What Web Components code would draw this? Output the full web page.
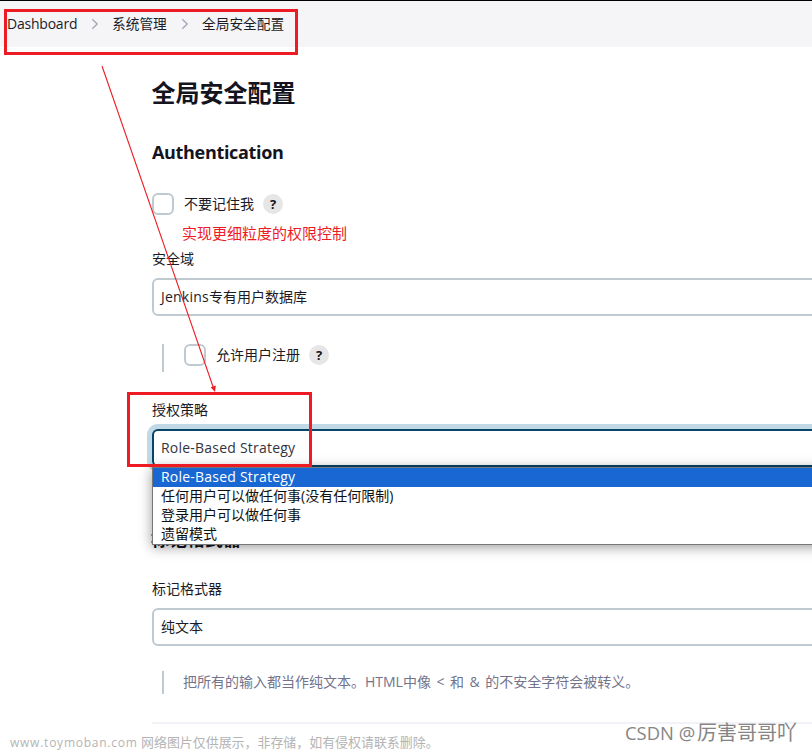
<!DOCTYPE html>
<html lang="zh-CN">
<head>
<meta charset="utf-8">
<title>全局安全配置</title>
<style>
html, body { margin: 0; height: 100%; overflow: hidden; background: #fff; }
body { font: 400 14px/18px "Open Sans", "Noto Sans CJK SC", sans-serif; color: #1b1b26; }
</style>
</head>
<body>
<security-page></security-page>
<script>
const define = (name, html) => {
  const template = document.createElement('template');
  template.innerHTML = html;
  customElements.define(name, class extends HTMLElement {
    constructor() {
      super();
      this.attachShadow({ mode: 'open' }).append(template.content.cloneNode(true));
    }
  });
};

define('crumb-separator', `
<style>:host{display:block;width:8px;height:12px} svg{display:block}</style>
<svg width="8" height="12" viewBox="0 0 8 12" fill="none" stroke="#a3a3b8" stroke-width="1.3"><path d="M1.3 1.2 6.2 6 1.3 10.8"/></svg>`);

define('page-breadcrumbs', `
<style>
:host{display:flex;box-sizing:border-box;height:47px;border-top:1px solid #000;background:#f5f5f8;padding:0 0 1px 7px;align-items:center;font-size:13.7px;white-space:nowrap}
.a{width:70px;font-size:14px;letter-spacing:-.22px}
crumb-separator{margin:0 13px 0 14px}
.b{width:55px}
</style>
<span class="a">Dashboard</span><crumb-separator></crumb-separator><span class="b">系统管理</span><crumb-separator></crumb-separator><span>全局安全配置</span>`);

define('help-button', `
<style>:host{display:flex;width:20px;height:20px;border-radius:50%;background:#e6e6e6;align-items:center;justify-content:center;font:bold 13px/20px "Open Sans",sans-serif;color:#14141f}</style>
<span>?</span>`);

define('check-option', `
<style>
:host{display:flex;height:22px;align-items:center}
i{box-sizing:border-box;width:22px;height:22px;border:2px solid #bfcad0;border-radius:6px;margin-right:10px;background:#fff}
help-button{margin-left:9px}
</style>
<i></i><slot></slot><help-button></help-button>`);

define('select-box', `
<style>
:host{display:flex;box-sizing:border-box;height:38px;border:2px solid #bfcad0;border-radius:6px;padding-left:7px;align-items:center;background:#fff;position:relative}
:host([focused]){border-color:#074467;box-shadow:0 0 0 5px #c1d9e6;color:#333340}
</style>
<slot></slot>`);

define('option-list', `
<style>
:host{display:block;position:absolute;z-index:1;left:-2px;right:-2px;top:36px;box-sizing:border-box;height:78px;border:1px solid #777;background:#fff;box-shadow:0 2px 12px rgba(0,0,0,.4);color:#101010}
::slotted(div){height:19px;line-height:17px;padding-left:8px}
::slotted(div[selected]){background:#1967d2;color:#fff}
</style>
<slot></slot>`);

define('nested-note', `
<style>:host{display:flex;box-sizing:border-box;margin-left:10px;padding-left:20px;border-left:2px solid #bfcad0}</style>
<slot></slot>`);

define('red-frame', `
<style>:host{display:block;position:absolute;z-index:3;box-sizing:border-box;border:3px solid #ed1c24}</style>`);

define('red-arrow', `
<style>:host{display:block;position:absolute;z-index:3;left:0;top:0} svg{display:block}</style>
<svg width="320" height="400"><path d="M102 66 213.5 388" stroke="#ed1c24" stroke-width="1.1"/><path d="M215 392 210.7 387.2 215.8 385.6Z" fill="#ed1c24"/></svg>`);

define('security-page', `
<style>
:host{display:block;position:relative;height:751px;overflow:hidden}
main{margin:0 -20px 0 152px}
h1,h2{margin:0;color:#14141f}
h1{font-size:24px;line-height:92px;text-indent:-.5px}
h2{font-size:18px;line-height:28px}
.auth{letter-spacing:-.32px;line-height:26px;padding-bottom:2px}
check-option.first{margin-top:26px}
.label{height:18px;margin-bottom:10px}
.realm{margin-top:35px}
.signup{height:28px;margin-top:28px}
.strategy{margin-top:29px}
.wide{letter-spacing:.22px}
.format{margin-top:61px;line-height:22px;text-indent:-1px}
.formatter{margin-top:30px}
.desc{height:23px;margin-top:25px;align-items:center;color:#73738c;padding-left:19px;word-spacing:1.9px}
.desc span{padding-bottom:2px}
hr{margin:28px 0 0;border:0;height:2px;background:#f2f2f8}
.note{position:absolute;left:182px;top:224px;font-size:15px;color:#ed1c24}
.source{position:absolute;left:10px;top:733px;font-size:12.95px;color:#b4b4b4;white-space:nowrap}
.source span{display:inline-block;width:131px;font-size:12px;letter-spacing:.76px}
.csdn{position:absolute;left:625px;top:720px;font-size:20px;line-height:25px;color:#858585;white-space:nowrap}
.csdn span{display:inline-block;width:72px;font-size:18.4px}
.f1{left:4px;top:9px;width:294px;height:46px}
.f2{left:127px;top:392px;width:185px;height:75px}
</style>
<page-breadcrumbs></page-breadcrumbs>
<main>
<h1>全局安全配置</h1>
<h2 class="auth">Authentication</h2>
<check-option class="first">不要记住我</check-option>
<div class="label realm">安全域</div>
<select-box><span><span class="wide">Jenkins</span>专有用户数据库</span></select-box>
<nested-note class="signup"><check-option>允许用户注册</check-option></nested-note>
<div class="label strategy">授权策略</div>
<select-box focused><span class="wide">Role-Based Strategy</span>
<option-list><div selected class="wide">Role-Based Strategy</div><div>任何用户可以做任何事(没有任何限制)</div><div>登录用户可以做任何事</div><div>遗留模式</div></option-list>
</select-box>
<h2 class="format">标记格式器</h2>
<div class="label formatter">标记格式器</div>
<select-box>纯文本</select-box>
<nested-note class="desc"><span>把所有的输入都当作纯文本。HTML中像 &lt; 和 &amp; 的不安全字符会被转义。</span></nested-note>
<hr>
</main>
<div class="note">实现更细粒度的权限控制</div>
<div class="source"><span>www.toymoban.com</span>网络图片仅供展示，非存储，如有侵权请联系删除。</div>
<div class="csdn"><span>CSDN @</span>厉害哥哥吖</div>
<red-arrow></red-arrow>
<red-frame class="f1"></red-frame>
<red-frame class="f2"></red-frame>`);
</script>
</body>
</html>
